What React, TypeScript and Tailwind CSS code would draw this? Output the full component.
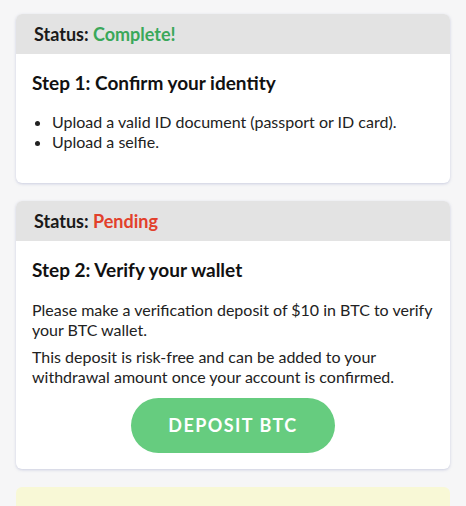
import React from "react";

type StepProps = {
  status: string;
  statusColor: string;
  title: string;
  children: React.ReactNode;
};

function StepCard({ status, statusColor, title, children }: StepProps) {
  return (
    <div className="bg-white rounded-md overflow-hidden shadow-[0_1px_3px_rgba(120,130,180,0.35)]">
      <div className="bg-[#e3e3e3] h-[40px] flex items-center px-[18px] text-[18px] font-bold text-[#1a1a1a]">
        Status:&nbsp;<span className={statusColor}>{status}</span>
      </div>
      <div className="px-4 pt-[17px] pb-4">
        <h2 className="text-[19px] font-bold text-[#111] leading-[24px]">{title}</h2>
        {children}
      </div>
    </div>
  );
}

export default function App() {
  return (
    <div
      className="min-h-screen bg-[#f6f6f7] px-4 pt-[14px] flex flex-col gap-[18px]"
      style={{ fontFamily: "Lato, 'Open Sans', sans-serif" }}
    >
      <StepCard status="Complete!" statusColor="text-[#3aa85a]" title="Step 1: Confirm your identity">
        <ul className="list-disc pl-[20px] mt-[17px] mb-[15px] text-[16px] leading-[20px] text-[#222]">
          <li>Upload a valid ID document (passport or ID card).</li>
          <li>Upload a selfie.</li>
        </ul>
      </StepCard>

      <StepCard status="Pending" statusColor="text-[#e2402b]" title="Step 2: Verify your wallet">
        <div className="mt-[18px] text-[16px] leading-[20px] text-[#222] flex flex-col gap-[7px]">
          <p>Please make a verification deposit of $10 in BTC to verify your BTC wallet.</p>
          <p>This deposit is risk-free and can be added to your withdrawal amount once your account is confirmed.</p>
        </div>
        <div className="flex justify-center mt-[11px]">
          <button className="w-[204px] h-[55px] rounded-full bg-[#66cc7f] text-white text-[18px] font-bold tracking-[0.08em]">
            DEPOSIT BTC
          </button>
        </div>
      </StepCard>

      <div className="bg-[#f8f8d6] rounded-md h-[60px]" />
    </div>
  );
}
